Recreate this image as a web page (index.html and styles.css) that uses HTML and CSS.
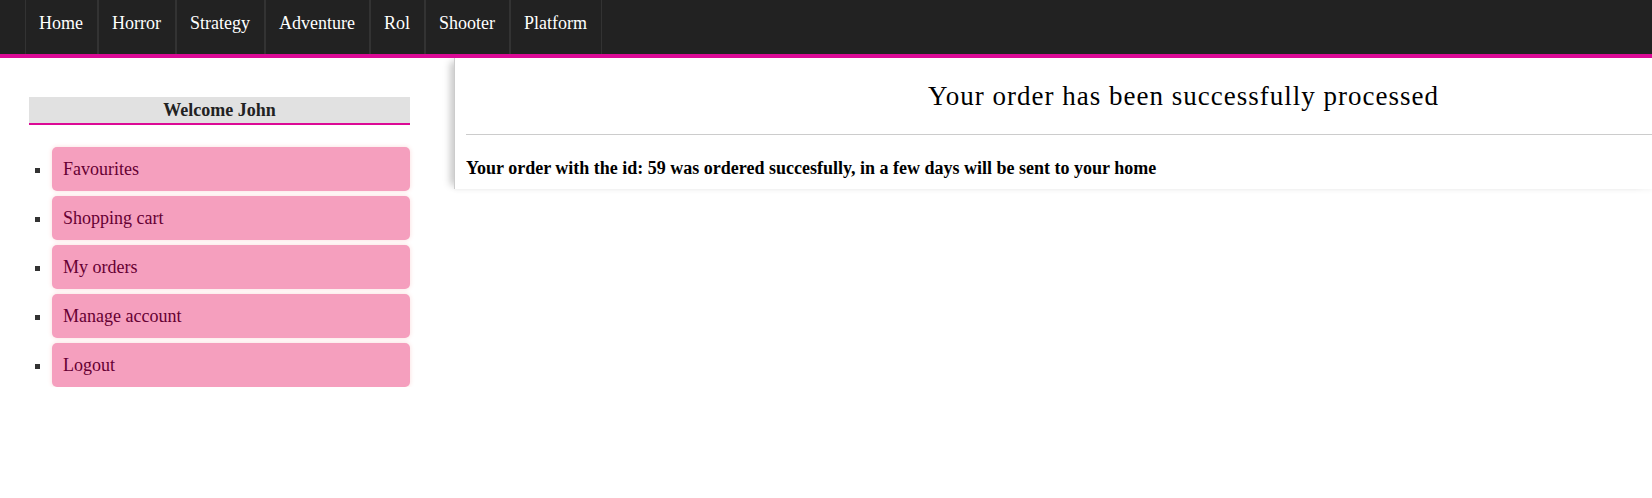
FILE: index.html
```html
<!DOCTYPE html>
<html lang="en">
<head>
<meta charset="utf-8">
<title>Order processed</title>
<link rel="stylesheet" href="styles.css">
</head>
<body>
<nav class="menu">
  <ul class="menu-list">
    <li class="menu-item"><a href="#">Home</a></li>
    <li class="menu-item"><a href="#">Horror</a></li>
    <li class="menu-item"><a href="#">Strategy</a></li>
    <li class="menu-item"><a href="#">Adventure</a></li>
    <li class="menu-item"><a href="#">Rol</a></li>
    <li class="menu-item"><a href="#">Shooter</a></li>
    <li class="menu-item"><a href="#">Platform</a></li>
  </ul>
</nav>
<div class="layout">
  <aside class="sidebar">
    <h3 class="welcome">Welcome John</h3>
    <ul class="account">
      <li><a href="#">Favourites</a></li>
      <li><a href="#">Shopping cart</a></li>
      <li><a href="#">My orders</a></li>
      <li><a href="#">Manage account</a></li>
      <li><a href="#">Logout</a></li>
    </ul>
  </aside>
  <main class="content">
    <h1 class="title">Your order has been successfully processed</h1>
    <p class="message">Your order with the id: 59 was ordered succesfully, in a few days will be sent to your home</p>
  </main>
</div>
</body>
</html>
```
FILE: styles.css
```css
* {
  box-sizing: border-box;
}

body {
  margin: 0;
  background: #fff;
  color: #222;
  font-family: "Liberation Serif", "Times New Roman", serif;
  font-size: 18px;
}

a {
  color: inherit;
  text-decoration: none;
}

.menu {
  position: relative;
  z-index: 1;
  padding-left: 25px;
  background: #222;
  border-bottom: 4px solid #dc0a96;
}

.menu-list {
  display: flex;
  margin: 0;
  padding: 0;
  list-style: none;
}

.menu-item {
  border: solid #333;
  border-width: 0 1px;
}

.menu-item a {
  display: block;
  height: 54px;
  padding: 0 14px 0 13px;
  color: #fff;
  line-height: 46px;
}

.layout {
  display: grid;
  grid-template-columns: 381px 1fr;
  align-items: start;
  column-gap: 44px;
  padding-left: 29px;
}

.welcome {
  margin: 39px 0 22px;
  background: #e1e1e1;
  border-bottom: 2px solid #dc0a96;
  font-size: 18px;
  line-height: 26px;
  text-align: center;
}

.account {
  display: flex;
  flex-direction: column;
  gap: 5px;
  margin: 0;
  padding-left: 23px;
  color: #333;
  list-style: square;
}

.account a {
  display: block;
  padding: 0 11px;
  border-radius: 5px;
  background: #f59fbe;
  box-shadow: 0 0 5px #fadcdc;
  color: #660033;
  line-height: 44px;
}

.content {
  padding-left: 11px;
  border-left: 1px solid #ccc;
  box-shadow: -8px 0 7px -4px #ccc, 0 0 6px #eee;
  color: #000;
}

.title {
  margin: 0;
  padding: 18px 0 18px 21%;
  border-bottom: 1px solid #ccc;
  font-size: 27px;
  font-weight: 400;
  letter-spacing: 1px;
  line-height: 40px;
  text-align: center;
}

.message {
  margin: 22px 0 10px;
  font-size: 18px;
  font-weight: 700;
  line-height: 22px;
}
```
